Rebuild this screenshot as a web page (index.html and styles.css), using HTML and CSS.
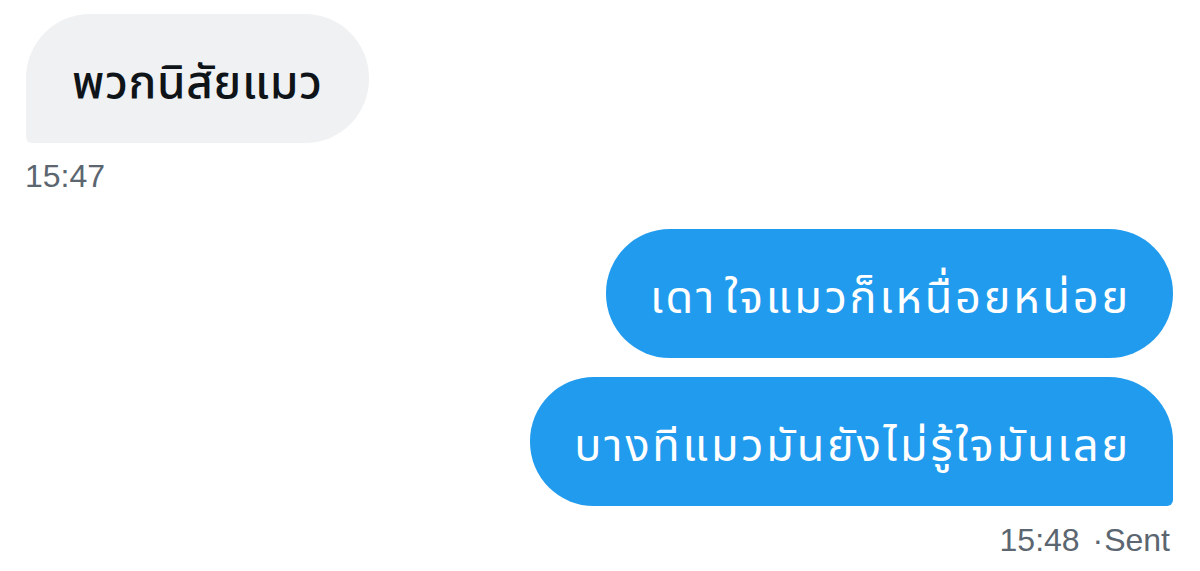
FILE: index.html
```html
<!DOCTYPE html>
<html lang="th">
<head>
<meta charset="utf-8">
<title>DM</title>
<link rel="stylesheet" href="styles.css">
</head>
<body>
<main class="chat">
  <div class="group received">
    <div class="bubble bubble-in last">พวกนิสัยแมว</div>
    <div class="meta">15:47</div>
  </div>
  <div class="group sent">
    <div class="bubble bubble-out">เดา ใจแมวก็เหนื่อยหน่อย</div>
    <div class="bubble bubble-out last">บางทีแมวมันยังไม่รู้ใจมันเลย</div>
    <div class="meta">15:48 <span class="dot">·</span>Sent</div>
  </div>
</main>
</body>
</html>
```

FILE: styles.css
```css
html, body {
  margin: 0;
  padding: 0;
  background: #ffffff;
}

body {
  font-family: "Noto Sans Thai", "Noto Sans", "Liberation Sans", sans-serif;
  width: 1200px;
  height: 571px;
  overflow: hidden;
}

.chat {
  display: flex;
  flex-direction: column;
  padding: 14px 27px 0 26px;
}

.group {
  display: flex;
  flex-direction: column;
  gap: 19px;
}

.received {
  align-items: flex-start;
}

.sent {
  align-items: flex-end;
  margin-top: 35px;
}

.bubble {
  box-sizing: border-box;
  height: 129px;
  display: flex;
  align-items: center;
  padding: 10px 42px 0 44px;
  font-size: 45px;
  letter-spacing: 2.8px;
  word-spacing: -7px;
  border-radius: 64px;
  white-space: nowrap;
}

.bubble-in {
  background: #eff1f3;
  color: #0f1419;
  font-size: 46px;
  font-weight: 550;
  letter-spacing: 0.6px;
  padding: 10px 47px 0 46px;
}

.bubble-in.last {
  border-bottom-left-radius: 6px;
}

.bubble-out {
  background: #219bee;
  color: #ffffff;
}

.bubble-out.last {
  border-bottom-right-radius: 6px;
}

.meta {
  font-family: "Liberation Sans", Arial, sans-serif;
  font-size: 32px;
  line-height: 36px;
  color: #5b6670;
  margin-top: -4px;
  word-spacing: 0;
}

.received .meta {
  margin-left: -1px;
}

.sent .meta {
  margin-right: 3px;
  margin-top: -3px;
}

.dot {
  margin-left: 4px;
  margin-right: 1px;
}
```
